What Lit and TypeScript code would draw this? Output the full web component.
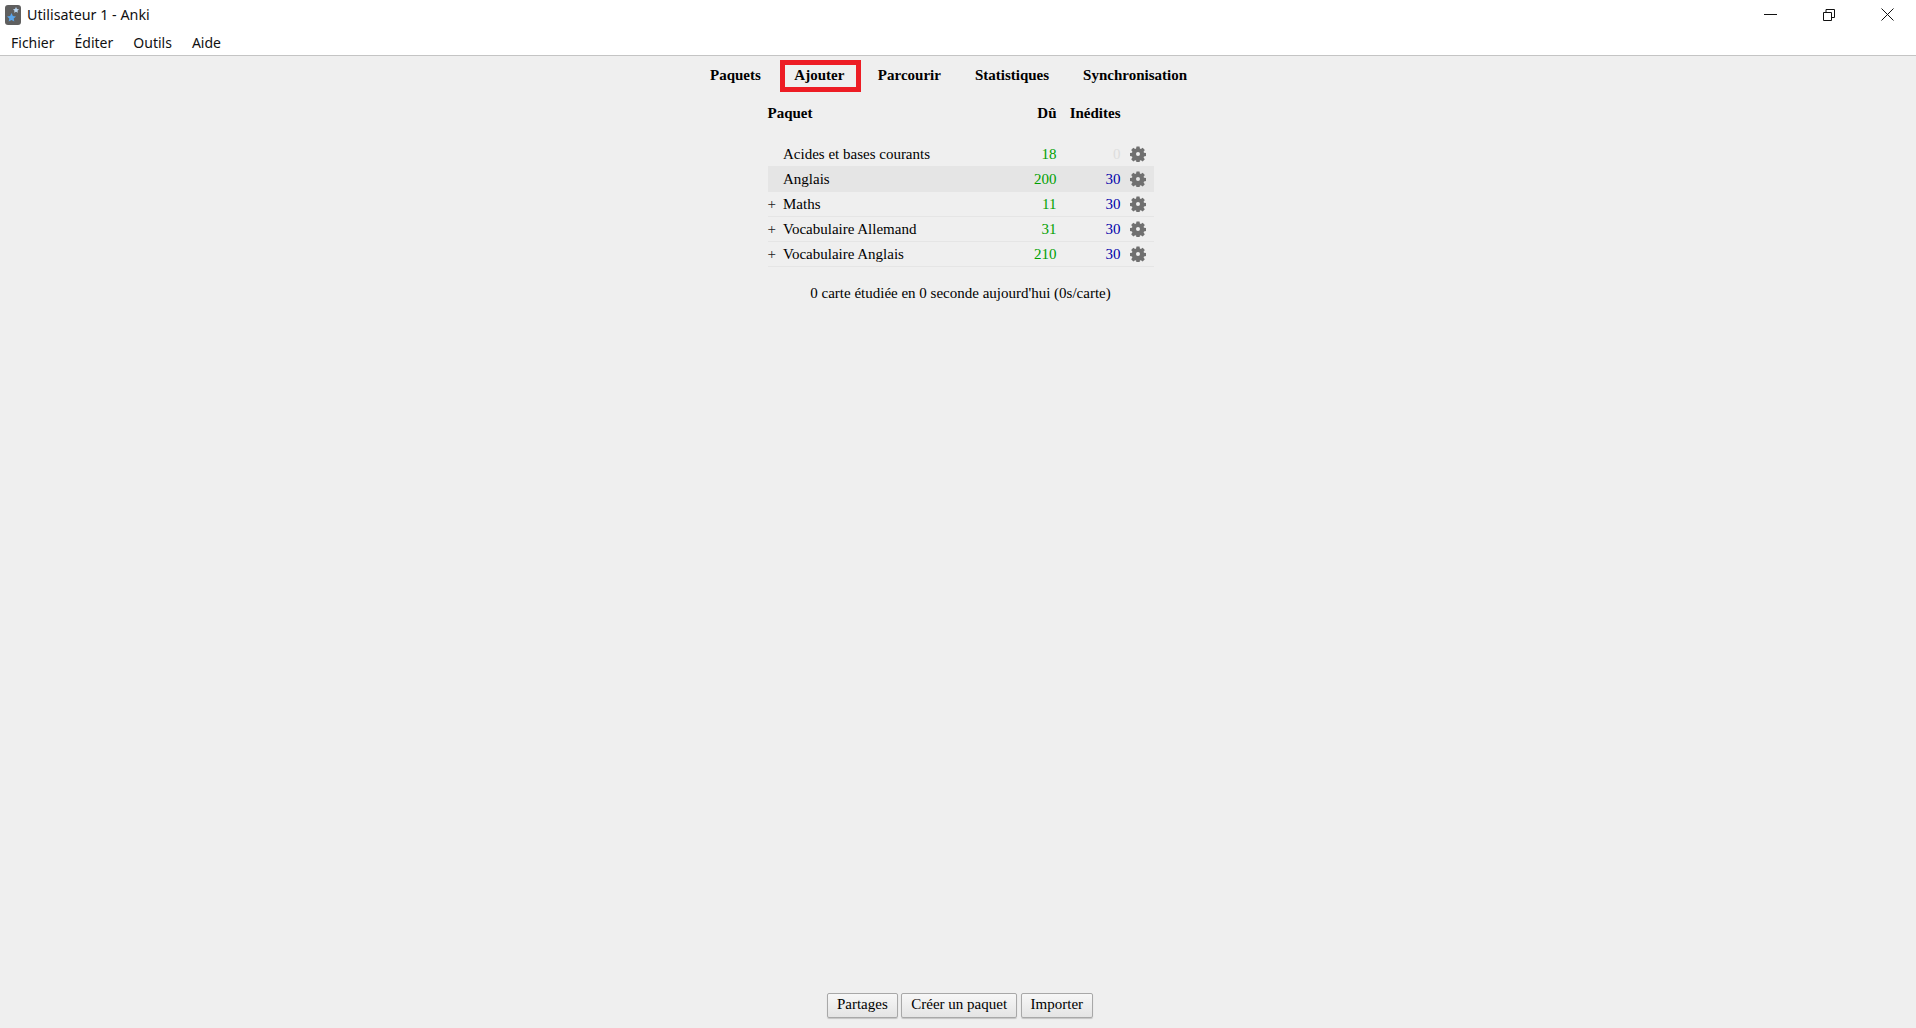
import { LitElement, css, html, svg } from "lit";
import { customElement } from "lit/decorators.js";

type Deck = {
  name: string;
  due: number;
  fresh: number;
  expandable?: boolean;
  current?: boolean;
};

const DECKS: Deck[] = [
  { name: "Acides et bases courants", due: 18, fresh: 0 },
  { name: "Anglais", due: 200, fresh: 30, current: true },
  { name: "Maths", due: 11, fresh: 30, expandable: true },
  { name: "Vocabulaire Allemand", due: 31, fresh: 30, expandable: true },
  { name: "Vocabulaire Anglais", due: 210, fresh: 30, expandable: true },
];

const NAV = ["Paquets", "Ajouter", "Parcourir", "Statistiques", "Synchronisation"];

const gear = svg`<svg class="gear" viewBox="0 0 16 16" width="16" height="16">
  <path fill="#707070" fill-rule="evenodd" d="M6.500 0.500h3l.4 2.100 1 .4 1.800-1.200 2.100 2.100-1.200 1.800.4 1 2.100.4v3l-2.100.4-.4 1 1.200 1.800-2.100 2.100-1.800-1.200-1 .4-.4 2.100h-3l-.4-2.100-1-.4-1.800 1.200-2.100-2.100 1.200-1.800-.4-1-2.100-.4v-3l2.100-.4.4-1-1.200-1.800 2.100-2.100 1.800 1.200 1-.4zM8 6a2 2 0 1 0 0 4 2 2 0 0 0 0-4z"/>
</svg>`;

@customElement("app-root")
export class AppRoot extends LitElement {
  static styles = css`
    :host {
      display: flex;
      flex-direction: column;
      height: 1028px;
      overflow: hidden;
      background: #efefef;
      font-family: "Liberation Serif", serif;
      font-size: 15px;
      color: #000;
    }

    .chrome {
      background: #fff;
      border-bottom: 1px solid #c4c4c4;
      font-family: "Noto Sans", "Open Sans", sans-serif;
      font-size: 14px;
      color: #111;
    }

    .title-bar {
      display: flex;
      align-items: center;
      height: 29px;
      padding-left: 5px;
      margin-right: -1px;
    }

    .app-icon {
      margin-right: 6px;
    }

    .title {
      flex: 1;
      font-size: 14.300px;
    }

    .win-btn {
      display: flex;
      align-items: center;
      justify-content: center;
      width: 58.500px;
      height: 29px;
    }

    .menu-bar {
      display: flex;
      height: 26px;
      align-items: center;
      padding-left: 11px;
      gap: 20px;
    }

    .content {
      flex: 1;
      display: flex;
      flex-direction: column;
      align-items: center;
    }

    nav {
      display: flex;
      align-items: center;
      height: 36px;
      margin-top: 2px;
      padding-right: 19px;
      font-weight: 700;
    }

    nav a {
      padding: 0 17px 2px;
      line-height: 20px;
      border: 5px solid transparent;
      margin: 0 -5px;
    }

    nav a.marked {
      border-color: #ed1c24;
      padding: 0 11.500px 2px 9.500px;
      margin: 0 0 0 2px;
    }

    table {
      width: 386px;
      border-collapse: collapse;
      margin-top: 4px;
      margin-left: 5px;
      table-layout: fixed;
    }

    th {
      height: 30px;
      padding: 0;
      font-weight: 700;
      text-align: right;
    }

    th.name {
      text-align: left;
    }

    td {
      height: 24px;
      padding: 0;
      border-bottom: 1px solid #e5e5e5;
    }

    tr.spacer td {
      height: 14px;
      border: 0;
    }

    tr.current td {
      background: #e5e5e5;
    }

    .name-cell {
      display: flex;
      align-items: center;
    }

    .toggle {
      width: 15.500px;
      color: #222;
    }

    .num {
      text-align: right;
    }

    .due {
      color: #00a000;
    }

    .fresh {
      color: #0000aa;
    }

    .none {
      color: #dddddd;
    }

    .opts {
      text-align: center;
      padding-left: 1px;
    }

    .gear {
      display: block;
      margin: 0 auto;
    }

    .summary {
      margin-top: 18px;
      margin-left: 5px;
    }

    footer {
      margin-top: auto;
      display: flex;
      gap: 3.500px;
      padding-bottom: 10px;
      margin-left: 4px;
    }

    button {
      font: inherit;
      font-size: 15px;
      height: 25px;
      padding: 0 9px 2px;
      color: #000;
      border: 1px solid #a8a8a8;
      border-radius: 2px;
      background: linear-gradient(#f7f7f7, #e4e4e4);
      box-shadow: 0 1px 1px rgba(0, 0, 0, 0.18);
    }
  `;

  render() {
    return html`
      <div class="chrome">
        <div class="title-bar">
          <svg class="app-icon" width="16" height="20" viewBox="0 0 16 20">
            <rect width="16" height="20" rx="3" fill="#5f5f5f" />
            <path fill="#bcd8f2" d="M11 2l1 2 2 .3-1.500 1.400.4 2-1.900-1-1.900 1 .4-2L8 4.300l2-.3z" />
            <path fill="#5aa5ea" d="M6.500 8l1.400 3 3.100.4-2.300 2.100.6 3.100-2.800-1.600-2.800 1.600.6-3.100L2 11.400l3.100-.4z" />
          </svg>
          <span class="title">Utilisateur 1 - Anki</span>
          <span class="win-btn">
            <svg width="13" height="2" viewBox="0 0 13 2"><path d="M0 .5h13" stroke="#111" /></svg>
          </span>
          <span class="win-btn">
            <svg width="12" height="12" viewBox="0 0 12 12" fill="none" stroke="#111">
              <path d="M.5 3.500h8v8h-8zM3 3.500V.5h8.500v8H8.500" />
            </svg>
          </span>
          <span class="win-btn">
            <svg width="13" height="13" viewBox="0 0 13 13" stroke="#111"><path d="M.5.500l12 12M12.500.500l-12 12" /></svg>
          </span>
        </div>
        <div class="menu-bar">
          <span>Fichier</span><span>Éditer</span><span>Outils</span><span>Aide</span>
        </div>
      </div>
      <div class="content">
        <nav>
          ${NAV.map((item) => html`<a class=${item === "Ajouter" ? "marked" : ""}>${item}</a>`)}
        </nav>
        <table>
          <colgroup>
            <col style="width: 229px" />
            <col style="width: 60px" />
            <col style="width: 64px" />
            <col style="width: 33px" />
          </colgroup>
          <tr>
            <th class="name">Paquet</th>
            <th>Dû</th>
            <th>Inédites</th>
            <th></th>
          </tr>
          <tr class="spacer"><td colspan="4"></td></tr>
          ${DECKS.map(
            (deck) => html`
              <tr class=${deck.current ? "current" : ""}>
                <td>
                  <div class="name-cell">
                    <span class="toggle">${deck.expandable ? "+" : ""}</span>${deck.name}
                  </div>
                </td>
                <td class="num due">${deck.due}</td>
                <td class="num ${deck.fresh ? "fresh" : "none"}">${deck.fresh}</td>
                <td class="opts">${gear}</td>
              </tr>
            `
          )}
        </table>
        <div class="summary">0 carte étudiée en 0 seconde aujourd'hui (0s/carte)</div>
        <footer>
          <button>Partages</button>
          <button>Créer un paquet</button>
          <button>Importer</button>
        </footer>
      </div>
    `;
  }
}
